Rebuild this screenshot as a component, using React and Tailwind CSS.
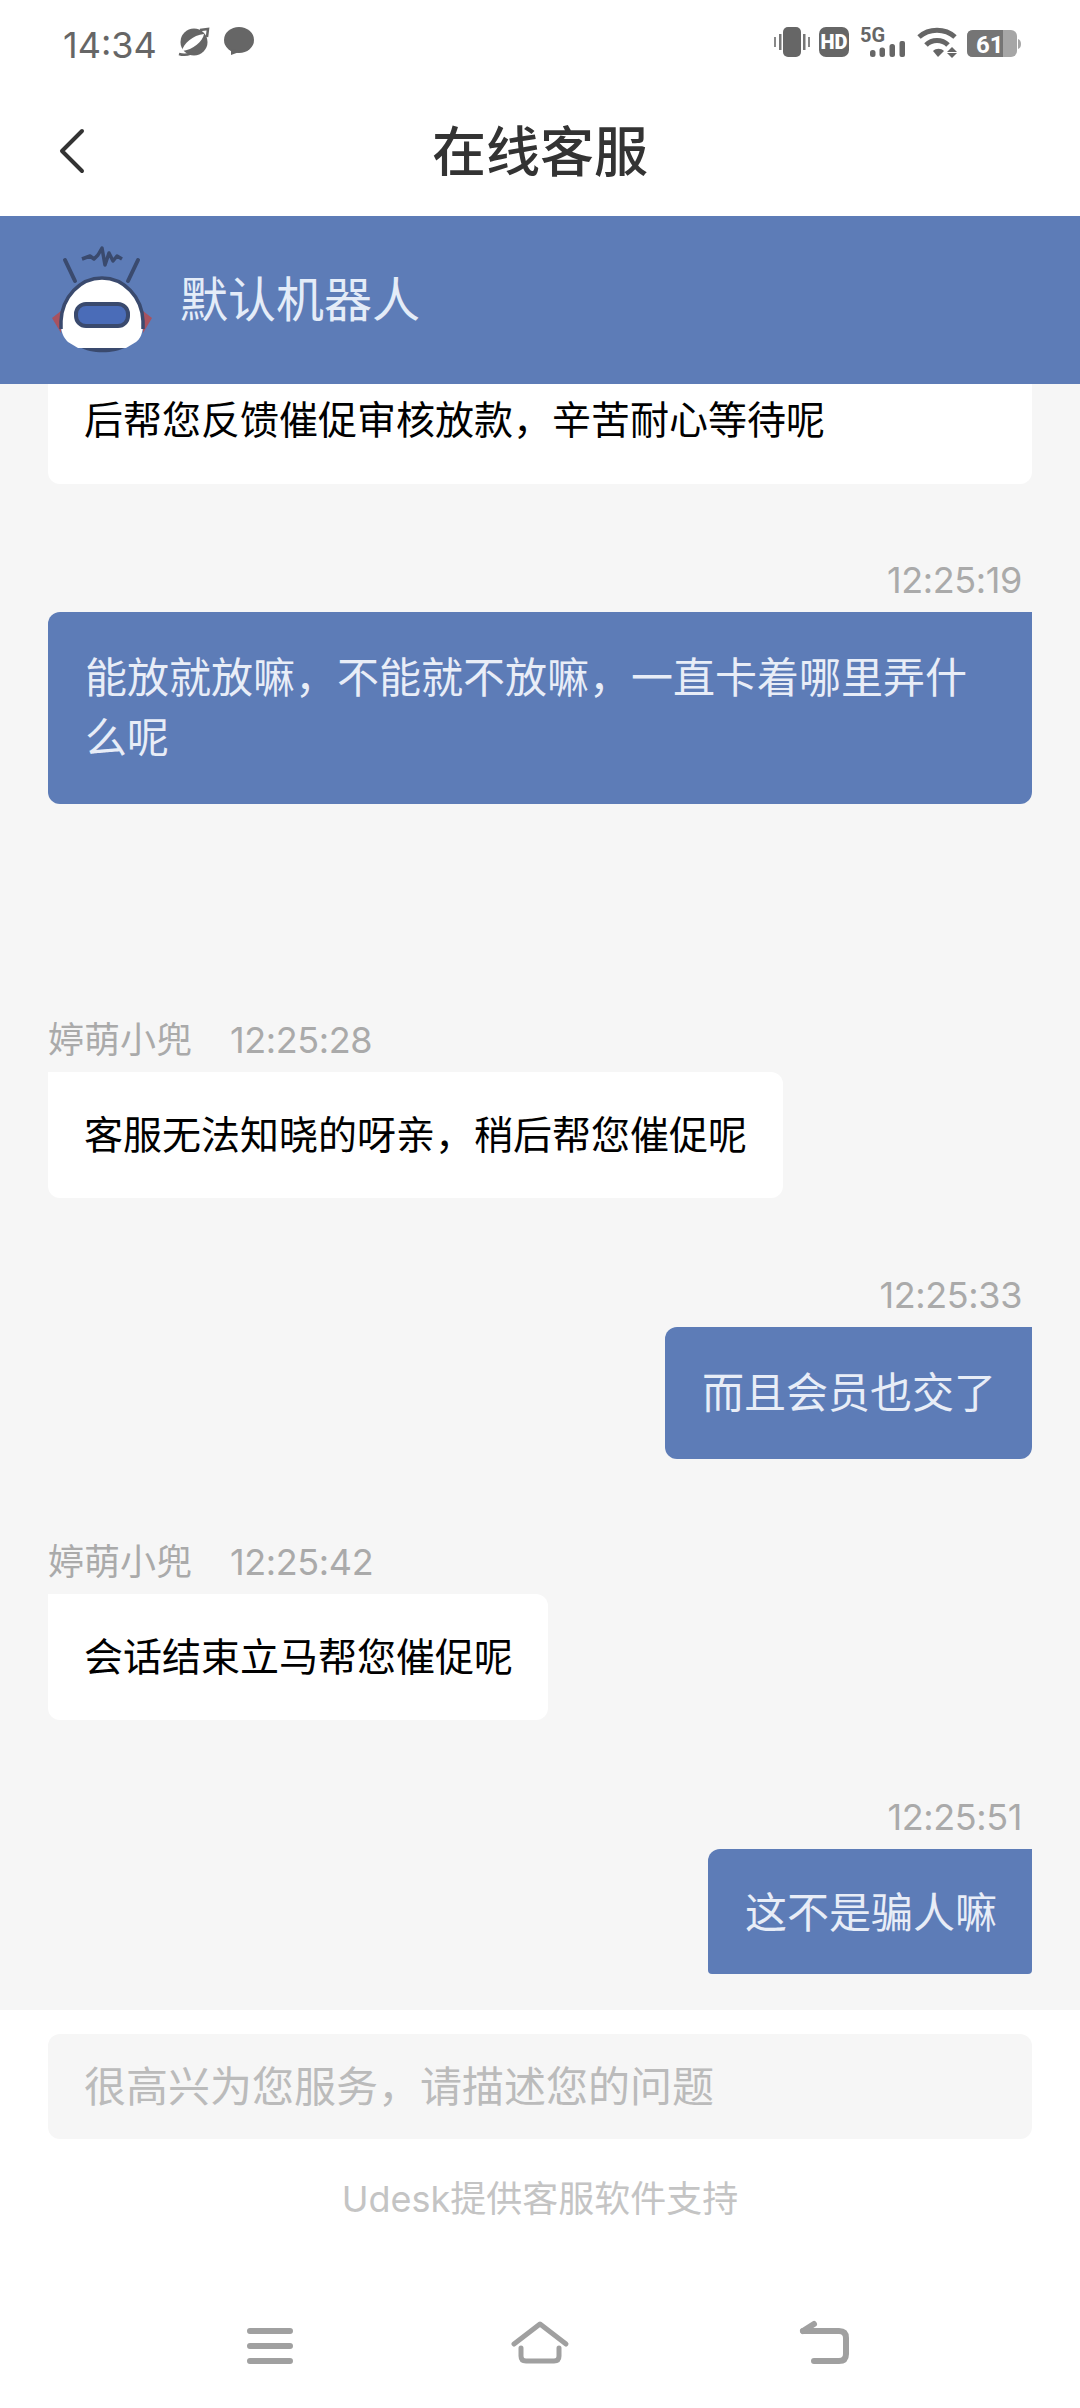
import { ChevronLeft } from 'lucide-react';

const font = "font-['Inter','Noto_Sans_CJK_SC',sans-serif]";

function StatusLeftIcons() {
  return (
    <svg width="90" height="40" viewBox="176 25 90 40" className="ml-[19px]">
      {/* planet */}
      <circle cx="194" cy="42" r="13.5" fill="#666" />
      <path d="M182 51 C 183 44, 193 35, 204 34 C 203 41, 193 50, 182 51 Z" fill="#fff" />
      <path d="M179 54 C 185 56, 192 54, 198 50" stroke="#666" strokeWidth="2.5" fill="none" />
      <path d="M200 30 L208 29 L207 37" stroke="#666" strokeWidth="2.5" fill="none" />
      {/* chat bubble */}
      <ellipse cx="239" cy="40" rx="15" ry="13" fill="#666" />
      <path d="M231 49 L231 55 L242 51 Z" fill="#666" />
    </svg>
  );
}

function StatusRightIcons() {
  return (
    <svg width="270" height="60" viewBox="760 15 270 60" className="block">
      {/* vibrate */}
      <rect x="783" y="27" width="18" height="30" rx="5" fill="#666" />
      <rect x="774" y="37" width="2" height="10" fill="#888" />
      <rect x="779" y="34" width="2.5" height="16" fill="#777" />
      <rect x="803" y="34" width="2.5" height="16" fill="#777" />
      <rect x="808" y="37" width="2" height="10" fill="#888" />
      {/* HD */}
      <rect x="819" y="27" width="30" height="30" rx="7" fill="#666" />
      <text x="834" y="49" textAnchor="middle" fontSize="20" fontWeight="900" fill="#fff" fontFamily="Roboto">HD</text>
      {/* 5G + signal */}
      <text x="860" y="42" fontSize="20" fontWeight="700" fill="#666" fontFamily="Roboto">5G</text>
      <rect x="870" y="50" width="5.5" height="7" rx="2.5" fill="#666" />
      <rect x="879.5" y="47.5" width="5.5" height="9.5" rx="2.5" fill="#666" />
      <rect x="889.5" y="44" width="5.5" height="13" rx="2.5" fill="#666" />
      <rect x="899.5" y="41" width="5.5" height="16" rx="2" fill="#666" />
      {/* wifi */}
      <path d="M919 37 C 929 28, 945 28, 955 37" stroke="#666" strokeWidth="5" fill="none" />
      <path d="M926 45 C 932 39, 942 39, 948 45" stroke="#666" strokeWidth="5" fill="none" />
      <path d="M933 51 L938 57 L944 51 C 941 48, 936 48, 933 51 Z" fill="#666" />
      <path d="M947 52 L952 47 L957 52 Z" fill="#666" />
      <path d="M947 53 L957 53 L952 58 Z" fill="#666" />
      {/* battery */}
      <rect x="967" y="30" width="50" height="27" rx="6" fill="#a6a6a6" />
      <path d="M973 30 L1003 30 L1003 57 L973 57 Q967 57 967 51 L967 36 Q967 30 973 30 Z" fill="#757575" />
      <path d="M1018 39 Q1021 40 1021 44 Q1021 48 1018 49 Z" fill="#a6a6a6" />
      <text x="976" y="53" fontSize="24" fontWeight="700" fill="#fff" fontFamily="Roboto">61</text>
    </svg>
  );
}

function RobotAvatar() {
  return (
    <svg width="140" height="140" viewBox="0 5 140 140" className="shrink-0">
      <path d="M35 35 L45 56" stroke="#3a4a6e" strokeWidth="4" strokeLinecap="round" />
      <path d="M108 35 L98 56" stroke="#3a4a6e" strokeWidth="4" strokeLinecap="round" />
      <path d="M52 34 L60 31 L64 34 L68 30 L72 23 L75 40 L79 28 L83 36 L87 31 L92 34" stroke="#3a4a6e" strokeWidth="3.5" fill="none" strokeLinejoin="round" />
      <path d="M22 93 L31 86 L31 108 Z" fill="#a8525f" />
      <path d="M122 93 L113 86 L113 108 Z" fill="#a8525f" />
      <path d="M50 122 C 60 129, 85 129, 96 122 Z" fill="#3a4a6e" />
      <path d="M31 100 C 31 72, 50 53, 72 53 C 94 53, 113 72, 113 100 C 113 108, 110 114, 106 117 L 96 123 L 48 123 L 38 117 C 34 113, 31 108, 31 100 Z" fill="#fff" />
      <path d="M31 104 L31 96 C 32 72, 50 53, 72 53 C 94 53, 112 72, 113 96 L113 104" stroke="#3a4a6e" strokeWidth="3.5" fill="none" />
      <rect x="46" y="79" width="52" height="22" rx="10" fill="#4a6cb8" stroke="#3a4a6e" strokeWidth="4" />
    </svg>
  );
}

function MenuIcon() {
  return (
    <svg width="60" height="60" viewBox="0 0 60 60">
      <path d="M10 18 H50 M10 33 H50 M10 48 H50" stroke="#a0a0a0" strokeWidth="6" strokeLinecap="round" />
    </svg>
  );
}

function HomeIcon() {
  return (
    <svg width="60" height="60" viewBox="0 0 60 60" className="ml-[210px]">
      <path d="M4 31 L30 11 L56 31" stroke="#a0a0a0" strokeWidth="5" strokeLinecap="round" strokeLinejoin="round" fill="none" />
      <path d="M11 35 V43 Q11 48 16 48 H44 Q49 48 49 43 V35" stroke="#a0a0a0" strokeWidth="5" strokeLinecap="round" fill="none" />
    </svg>
  );
}

function BackIcon() {
  return (
    <svg width="60" height="60" viewBox="0 0 60 60" className="ml-[225px]">
      <path d="M8 18 H44 Q51 18 51 25 V41 Q51 48 44 48 H19" stroke="#a0a0a0" strokeWidth="6" strokeLinecap="round" fill="none" />
      <path d="M8 18 L19 11" stroke="#a0a0a0" strokeWidth="6" strokeLinecap="round" />
    </svg>
  );
}

function Time({ children }) {
  return <span className="tracking-[-0.4px]">{children}</span>;
}

function AgentMessage({ name, time, text, top, width }) {
  return (
    <div className={top}>
      <div className="flex h-10 items-center gap-[38px] text-[36px] text-[#aaaaaa]">
        <span>{name}</span>
        <Time>{time}</Time>
      </div>
      <div className={`mt-3 flex h-[126px] items-center rounded-xl rounded-tl-none bg-white pl-9 text-[39px] text-black ${width}`}>
        {text}
      </div>
    </div>
  );
}

function UserMessage({ time, children, top, bubble }) {
  return (
    <div className={`flex flex-col items-end ${top}`}>
      <div className="flex h-10 items-center pr-[10px] text-[36px] text-[#aaaaaa]">
        <Time>{time}</Time>
      </div>
      <div className={`mt-3 rounded-tl-xl bg-[#5d7cb7] pl-[37px] text-[42px] leading-[60px] text-[#e8edf7] ${bubble}`}>
        {children}
      </div>
    </div>
  );
}

export default function App() {
  return (
    <div className={`flex h-[2408px] w-[1080px] flex-col overflow-hidden bg-white ${font}`}>
      <div className="flex h-[72px] shrink-0 items-center justify-between pl-[63px] pr-[50px] pt-[18px]">
        <div className="flex items-center">
          <span className="text-[36px] leading-none text-[#666]">14:34</span>
          <StatusLeftIcons />
        </div>
        <StatusRightIcons />
      </div>

      <div className="relative flex h-[144px] shrink-0 items-center justify-center pt-4">
        <ChevronLeft className="absolute left-[32px] top-[39px]" size={80} strokeWidth={1.2} color="#333" />
        <span className="text-[54px] font-medium text-[#333]">在线客服</span>
      </div>

      <div className="flex h-[168px] shrink-0 items-center bg-[#5d7cb7] pl-[30px]">
        <RobotAvatar />
        <span className="ml-[10px] text-[48px] text-[#e4ecf8]">默认机器人</span>
      </div>

      <div className="h-[1626px] shrink-0 bg-[#f6f6f6] px-12 pb-9">
        <div className="h-[1590px] overflow-hidden">
          <div className="flex h-[100px] items-start rounded-b-xl bg-white pl-9 pt-[6px] text-[39px] leading-[60px] text-black">
            后帮您反馈催促审核放款，辛苦耐心等待呢
          </div>

          <UserMessage time="12:25:19" top="mt-[76px]" bubble="w-full rounded-b-xl pr-[37px] py-9">
            能放就放嘛，不能就不放嘛，一直卡着哪里弄什么呢
          </UserMessage>

          <AgentMessage name="婷萌小兜" time="12:25:28" top="mt-[216px]" width="w-[735px]" text="客服无法知晓的呀亲，稍后帮您催促呢" />

          <UserMessage time="12:25:33" top="mt-[77px]" bubble="w-[367px] rounded-b-xl py-9">
            而且会员也交了
          </UserMessage>

          <AgentMessage name="婷萌小兜" time="12:25:42" top="mt-[83px]" width="w-[500px]" text="会话结束立马帮您催促呢" />

          <UserMessage time="12:25:51" top="mt-[77px]" bubble="h-[125px] w-[324px] rounded-b-[4px] pl-[36px] pt-[34px]">
            这不是骗人嘛
          </UserMessage>
        </div>
      </div>

      <div className="flex flex-1 flex-col px-12 pt-6">
        <div className="flex h-[105px] items-center rounded-xl bg-[#f6f6f6] pl-9 text-[42px] text-[#bbbbbb]">
          很高兴为您服务，请描述您的问题
        </div>
        <div className="mt-[38px] text-center text-[36px] leading-[44px] text-[#c4c4c4]">Udesk提供客服软件支持</div>
        <div className="mt-[92px] flex pl-[192px]">
          <MenuIcon />
          <HomeIcon />
          <BackIcon />
        </div>
      </div>
    </div>
  );
}
